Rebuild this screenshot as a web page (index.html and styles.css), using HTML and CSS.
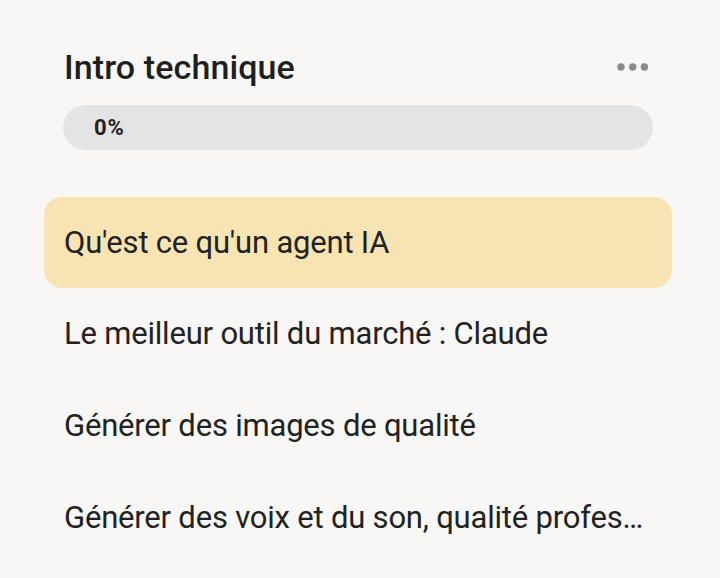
FILE: index.html
```html
<!DOCTYPE html>
<html lang="fr">
<head>
<meta charset="utf-8">
<link rel="stylesheet" href="styles.css">
</head>
<body>
<div class="panel">
  <div class="header">
    <h1 class="title">Intro technique</h1>
    <button class="more" aria-label="Plus d'options">
      <svg width="32" height="8" viewBox="0 0 32 8"><circle cx="4" cy="4" r="3.7" fill="#8a8a8a"/><circle cx="15.7" cy="4" r="3.7" fill="#8a8a8a"/><circle cx="27.4" cy="4" r="3.7" fill="#8a8a8a"/></svg>
    </button>
  </div>
  <div class="progress"><span class="progress-label">0%</span></div>
  <ul class="lessons">
    <li class="lesson active">Qu'est ce qu'un agent IA</li>
    <li class="lesson">Le meilleur outil du marché : Claude</li>
    <li class="lesson">Générer des images de qualité</li>
    <li class="lesson">Générer des voix et du son, qualité professionnelle</li>
  </ul>
</div>
</body>
</html>
```
FILE: styles.css
```css
* { box-sizing: border-box; }
html, body { margin: 0; padding: 0; }
body {
  background: #f8f7f5;
  font-family: Roboto, "Liberation Sans", sans-serif;
  color: #222222;
  width: 720px;
  height: 578px;
  overflow: hidden;
}
.panel {
  padding: 47px 48px 0 44px;
}
.header {
  display: flex;
  align-items: center;
  justify-content: space-between;
  height: 40px;
  padding: 0 0 0 20px;
}
.title {
  margin: 0;
  font-size: 34px;
  font-weight: 500;
  letter-spacing: 0.1px;
  color: #1f1f1f;
}
.more {
  border: 0;
  background: none;
  padding: 0;
  display: flex;
  margin-right: 23px;
}
.progress {
  margin: 18px 19px 0 19px;
  height: 45px;
  border-radius: 23px;
  background: #e4e4e4;
  display: flex;
  align-items: center;
  padding-left: 31px;
}
.progress-label {
  font-size: 22px;
  font-weight: 700;
  letter-spacing: 1px;
  color: #222;
}
.lessons {
  list-style: none;
  margin: 47px 0 0 0;
  padding: 0;
}
.lesson {
  display: block;
  height: 92px;
  line-height: 92px;
  padding: 0 20px;
  font-size: 31px;
  letter-spacing: -0.2px;
  border-radius: 18px;
  white-space: nowrap;
  overflow: hidden;
  text-overflow: ellipsis;
}
.lesson.active {
  background: #f7e4b2;
  height: 91px;
  line-height: 91px;
}
```
